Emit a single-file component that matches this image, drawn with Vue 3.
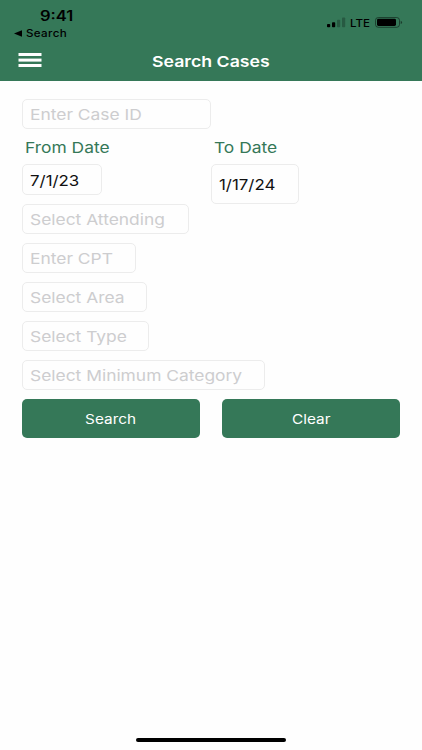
<script setup>
const filters = [
  { text: 'Select Attending', name: 'attending' },
  { text: 'Enter CPT', name: 'cpt' },
  { text: 'Select Area', name: 'area' },
  { text: 'Select Type', name: 'type' },
  { text: 'Select Minimum Category', name: 'category' },
]
</script>

<template>
  <div class="screen">
    <header class="header">
      <div class="status">
        <div class="status-left">
          <span class="wide time">9:41</span>
          <div class="back">
            <svg width="8" height="7" viewBox="0 0 8 7"><path d="M0 3.5 8 .3V6.7Z" /></svg>
            <span class="wide back-text">Search</span>
          </div>
        </div>
        <div class="status-right">
          <svg class="signal" width="19" height="11" viewBox="0 0 19 11">
            <rect x="0" y="7" width="3.2" height="3.3" rx=".8" />
            <rect x="5" y="5.2" width="3.2" height="5.1" rx=".8" />
            <rect x="10" y="2.8" width="3.2" height="7.5" rx=".8" opacity=".25" />
            <rect x="15" y=".4" width="3.2" height="9.9" rx=".8" opacity=".25" />
          </svg>
          <span class="wide lte">LTE</span>
          <svg class="battery" width="28" height="11" viewBox="0 0 28 11">
            <rect x=".5" y=".5" width="24" height="9.8" rx="2.8" fill="none" stroke="#000" stroke-opacity=".45" />
            <rect x="2" y="1.8" width="19" height="7.2" rx="1.4" />
            <path d="M25.7 3.7q1.4.5 1.4 1.7t-1.4 1.7Z" opacity=".5" />
          </svg>
        </div>
      </div>
      <div class="navbar">
        <svg class="menu" width="24" height="15" viewBox="0 0 24 15" fill="#fff">
          <rect y="0" x=".5" width="23" height="3" />
          <rect y="5.6" x=".5" width="23" height="3" />
          <rect y="11" x=".5" width="23" height="3" />
        </svg>
        <h1 class="title"><span class="wide">Search Cases</span></h1>
      </div>
    </header>

    <main class="form">
      <div class="field case-id"><span class="wide">Enter Case ID</span></div>
      <div class="dates">
        <div class="date">
          <div class="label"><span class="wide">From Date</span></div>
          <div class="field value from"><span class="wide">7/1/23</span></div>
        </div>
        <div class="date">
          <div class="label"><span class="wide">To Date</span></div>
          <div class="field value to"><span class="wide">1/17/24</span></div>
        </div>
      </div>
      <div v-for="f in filters" :key="f.name" class="field" :class="f.name">
        <span class="wide">{{ f.text }}</span>
      </div>
      <div class="actions">
        <button class="button"><span class="wide">Search</span></button>
        <button class="button"><span class="wide">Clear</span></button>
      </div>
    </main>
    <div class="home"></div>
  </div>
</template>

<style>
body {
  margin: 0;
  background: #fefefe;
}
</style>

<style scoped>
.screen {
  width: 422px;
  height: 750px;
  display: flex;
  flex-direction: column;
  overflow: hidden;
  font-family: Inter, "Liberation Sans", sans-serif;
  background: #fefefe;
}
svg {
  display: block;
  flex: none;
}
.wide {
  display: inline-block;
  white-space: nowrap;
  transform: scaleX(1.16);
  transform-origin: left center;
}
.header {
  flex: none;
  height: 81px;
  background: #357858;
}
.status {
  height: 42px;
  display: flex;
  justify-content: space-between;
}
.status-left {
  display: flex;
  flex-direction: column;
  align-items: flex-start;
  padding: 7px 0 0 14px;
}
.time {
  margin-left: 26px;
  font-size: 13.8px;
  line-height: 18px;
  font-weight: 600;
  transform: scaleX(1.2);
}
.back {
  display: flex;
  align-items: center;
  gap: 4px;
  height: 16px;
}
.back-text {
  font-size: 10px;
  font-weight: 500;
  letter-spacing: .3px;
}
.status-right {
  display: flex;
  align-items: center;
  height: 12px;
  padding: 16px 19px 0 0;
}
.lte {
  width: 20px;
  margin: 0 5px 0 4px;
  font-size: 10.5px;
  font-weight: 500;
  transform: translateY(.5px) scaleX(1.1);
}
.navbar {
  height: 39px;
  display: flex;
  align-items: center;
  position: relative;
}
.menu {
  margin: -2px 0 0 18px;
}
.title {
  position: absolute;
  inset: 0;
  margin: 0;
  text-align: center;
  font-size: 15px;
  line-height: 39px;
  font-weight: 600;
}
.title .wide,
.button .wide {
  transform: scaleX(1.18);
  transform-origin: center;
  color: #fff;
}
.form {
  flex: 1;
  padding: 18px 22px 0;
  display: flex;
  flex-direction: column;
  align-items: flex-start;
  gap: 9px;
}
.field {
  box-sizing: border-box;
  height: 30px;
  padding-left: 6.5px;
  border: 1px solid #ececec;
  border-radius: 5px;
  display: flex;
  align-items: center;
  font-size: 15px;
  color: #cdcdcf;
}
.case-id { width: 189px; }
.attending { width: 167px; }
.cpt { width: 114px; }
.area { width: 125px; }
.type { width: 127px; }
.category { width: 243px; }
.value {
  padding-top: 1px;
  color: #111;
}
.value .wide { transform: scaleX(1.125); }
.from { width: 80px; height: 31px; }
.to { width: 88px; height: 40px; }
.dates {
  display: flex;
  width: 378px;
  height: 57px;
}
.date {
  width: 189px;
}
.label {
  box-sizing: border-box;
  height: 26px;
  padding: 1px 0 0 3px;
  line-height: 18px;
  font-size: 15px;
  color: #357858;
}
.actions {
  display: flex;
  gap: 22px;
  width: 378px;
}
.button {
  flex: 1;
  height: 39px;
  padding: 0;
  border: 0;
  border-radius: 5px;
  background: #357858;
  font: 400 13px Inter, sans-serif;
}
.home {
  flex: none;
  width: 150px;
  height: 4px;
  margin: 0 auto 8px;
  border-radius: 2px;
  background: #000;
}
</style>
